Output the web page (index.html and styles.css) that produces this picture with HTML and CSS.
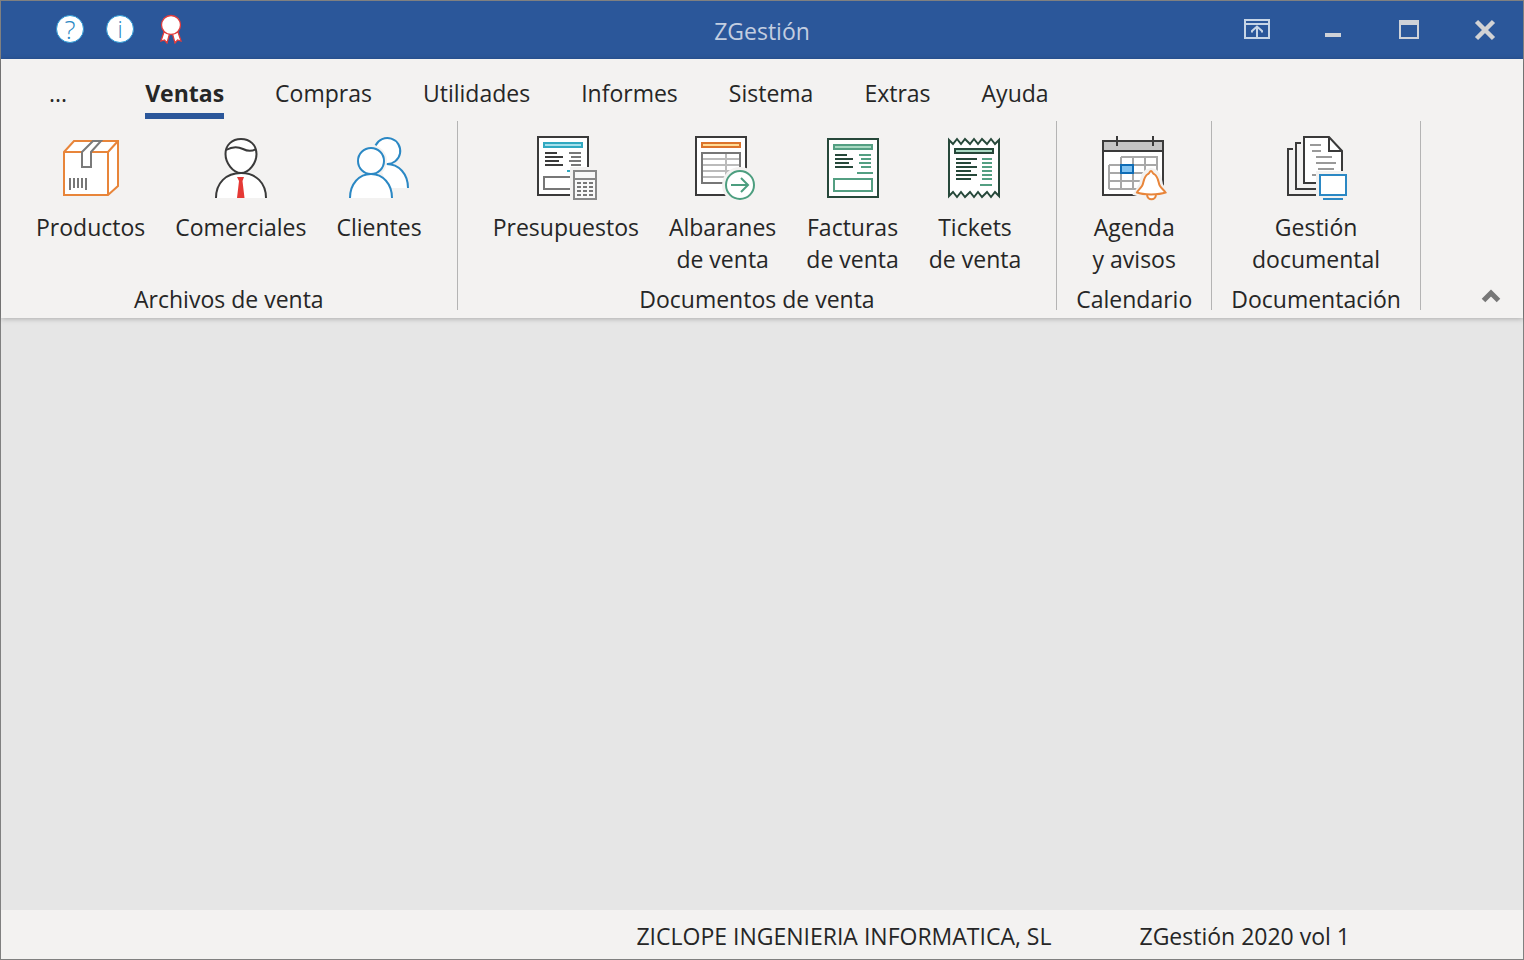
FILE: index.html
```html
<!DOCTYPE html>
<html lang="es">
<head>
    <meta charset="UTF-8">
    <meta name="viewport" content="width=device-width, initial-scale=1.0">
    <title>ZGestión</title>
    <link rel="stylesheet" href="styles.css">
</head>
<body>
    <div class="window">
        <header class="titlebar">
            <div class="quick-access">
                <button class="round-button" aria-label="Ayuda"><span class="help-mark">?</span></button>
                <button class="round-button" aria-label="Información"><span class="info-mark">i</span></button>
                <button class="award-button" aria-label="Licencia">
                    <svg width="28" height="30" viewBox="0 0 28 30" fill="#fff" stroke="#e23c3c" stroke-width="1.3">
                        <path d="M8 18 5 27 8.500 26 11 29 13.500 20ZM22 18 25 27 21.500 26 19 29 16.500 20Z"/>
                        <circle cx="15" cy="11" r="9.500"/>
                    </svg>
                </button>
            </div>
            <h1 class="title">ZGestión</h1>
            <div class="window-controls">
                <button aria-label="Opciones de la cinta">
                    <svg width="28" height="28" viewBox="0 0 28 28" fill="none" stroke="#c7d5e6" stroke-width="2">
                        <path d="M2 5H26V23H2ZM2 9H26M14 22V12M9 17.500V16L14 11.500 19 16V17.500"/>
                    </svg>
                </button>
                <button aria-label="Minimizar">
                    <svg width="28" height="28" viewBox="0 0 28 28"><path d="M6 18H22V22H6Z" fill="#cfd2d8"/></svg>
                </button>
                <button aria-label="Maximizar">
                    <svg width="28" height="28" viewBox="0 0 28 28"><path d="M4 5H24V24H4ZM6 10V22H22V10Z" fill="#cfd2d8" fill-rule="evenodd"/></svg>
                </button>
                <button aria-label="Cerrar">
                    <svg width="28" height="28" viewBox="0 0 28 28"><path d="M5.500 6.500 22.500 23.500M22.500 6.500 5.500 23.500" stroke="#d2d2d4" stroke-width="4.500"/></svg>
                </button>
            </div>
        </header>

        <div class="ribbon">
            <nav class="tabs">
                <button class="tab tab-more">...</button>
                <button class="tab active">Ventas</button>
                <button class="tab">Compras</button>
                <button class="tab">Utilidades</button>
                <button class="tab">Informes</button>
                <button class="tab">Sistema</button>
                <button class="tab">Extras</button>
                <button class="tab">Ayuda</button>
            </nav>

            <div class="groups">
                <section class="group">
                    <div class="group-items">
                        <button class="item">
                            <svg class="icon" viewBox="0 0 72 72" fill="#fff" stroke="#e8853a" stroke-width="2">
                                <path d="M9 20 19 9H63V54L53 63H9Z"/>
                                <path d="M9 20H53V63M53 20 63 9"/>
                                <path d="M27 20 38 9H46L36 20V35H27Z" stroke="#7a7a7a"/>
                                <path d="M15 46V58M19 46V56M23 46V56M27 46V56M31 46V58" stroke="#777"/>
                            </svg>
                            <span>Productos</span>
                        </button>
                        <button class="item">
                            <svg class="icon" viewBox="0 0 72 72" fill="#fff" stroke="#3a3a3a" stroke-width="2">
                                <path d="M11 66C11 51 21 41 36 41S61 51 61 66"/>
                                <path d="M36 7C27 7 20.500 13 20.500 22 20.500 31 28 41 36 41S51.500 31 51.500 22C51.500 13 45 7 36 7Z"/>
                                <path d="M21 18C28 14 34 15 38 17S46 20 51 17" fill="none"/>
                                <path d="M32 45H39L37.500 49 39.500 66H32L34 49Z" fill="#e53935" stroke="none"/>
                            </svg>
                            <span>Comerciales</span>
                        </button>
                        <button class="item">
                            <svg class="icon" viewBox="0 0 72 72" fill="#fff" stroke="#2b88c4" stroke-width="2">
                                <path d="M32.500 13.500A13 13 0 1 1 43.500 32C56 32 65 42 65 56H46L38 38Z" stroke="none"/>
                                <path d="M32.500 13.500A13 13 0 1 1 43.500 32C56 32 65 42 65 56" fill="none"/>
                                <circle cx="28" cy="29" r="16" fill="#f3f2f1" stroke="none"/>
                                <path d="M7 66C7 52 16 42 28 42S49 52 49 66"/>
                                <circle cx="28" cy="29" r="13"/>
                            </svg>
                            <span>Clientes</span>
                        </button>
                    </div>
                    <h2 class="group-title">Archivos de venta</h2>
                </section>

                <section class="group">
                    <div class="group-items">
                        <button class="item">
                            <svg class="icon" viewBox="0 0 72 72" fill="none" stroke="#777" stroke-width="2">
                                <path d="M8 5H58V63H8Z" fill="#fff" stroke="#3a3a3a"/>
                                <path d="M14 11H52V15H14Z" fill="#a6e0ec" stroke="#31a9c1"/>
                                <path d="M15 21H27M15 25H33M15 29H29M15 33H33" stroke="#3a3a3a"/>
                                <path d="M39 21H51M41 25H51M39 29H51M41 33H51"/>
                                <path d="M37 39H40" stroke="#31a9c1"/>
                                <path d="M14 45H45V57H14Z"/>
                                <path d="M40 35H70V71H40Z" fill="#f3f2f1" stroke="none"/>
                                <path d="M44 39H66V67H44ZM44 47H66" fill="#f8f8f8" stroke="#888"/>
                                <path d="M47 51H51M53 51H57M59 51H63M47 55H51M53 55H57M59 55H63M47 59H51M53 59H57M59 59H63M47 63H51M53 63H57M59 63H63"/>
                            </svg>
                            <span>Presupuestos</span>
                        </button>
                        <button class="item">
                            <svg class="icon" viewBox="0 0 72 72" fill="none" stroke="#777" stroke-width="2">
                                <path d="M9 5H59V63H9Z" fill="#fff" stroke="#3a3a3a"/>
                                <path d="M15 11H53V15H15Z" fill="#ffdc96" stroke="#dc742b"/>
                                <path d="M15 27H53M15 33H53M15 39H53M15 45H53M39 21V51" stroke="#bbb"/>
                                <path d="M15 21H53V51H15Z"/>
                                <circle cx="53" cy="53" r="18" fill="#f3f2f1" stroke="none"/>
                                <circle cx="53" cy="53" r="14" fill="#fff" stroke="#4c9e7f"/>
                                <path d="M44 53H61M54 46 61 53 54 60" stroke="#4c9e7f"/>
                            </svg>
                            <span>Albaranes<br>de venta</span>
                        </button>
                        <button class="item">
                            <svg class="icon" viewBox="0 0 72 72" fill="none" stroke="#539f82" stroke-width="2">
                                <path d="M11 7H61V65H11Z" fill="#fff" stroke="#26483a"/>
                                <path d="M17 13H55V17H17Z" fill="#a8d9c2"/>
                                <path d="M18 23H30M18 27H36M18 31H32M18 35H36" stroke="#26483a"/>
                                <path d="M42 23H54M44 27H54M42 31H54M44 35H54M40 41H56"/>
                                <path d="M17 47H55V59H17Z"/>
                            </svg>
                            <span>Facturas<br>de venta</span>
                        </button>
                        <button class="item">
                            <svg class="icon" viewBox="0 0 72 72" fill="none" stroke="#26483a" stroke-width="2">
                                <path d="M10 8 14 12 18 7 22 12 26 7 31 12 35 7 39 12 43 7 48 12 52 7 56 12 60 8V64L56 60 52 65 48 60 43 65 39 60 35 65 31 60 26 65 22 60 18 65 14 60 10 64Z" fill="#fff"/>
                                <path d="M16 17H54V21H16Z" fill="#a8d9c2"/>
                                <path d="M17 27H38M17 31H32M17 35H38M17 39H32M17 43H38M17 47H32"/>
                                <path d="M43 27H53M43 31H53M43 35H53M43 39H53M43 43H53M43 47H53M41 53H53" stroke="#539f82"/>
                            </svg>
                            <span>Tickets<br>de venta</span>
                        </button>
                    </div>
                    <h2 class="group-title">Documentos de venta</h2>
                </section>

                <section class="group">
                    <div class="group-items">
                        <button class="item">
                            <svg class="icon" viewBox="0 0 72 72" fill="none" stroke="#3a3a3a" stroke-width="2">
                                <path d="M5 9H65V63H5Z" fill="#fff"/>
                                <path d="M5 9H65V19H5Z" fill="#c4c4c4"/>
                                <path d="M19 4V14M55 4V14"/>
                                <path d="M23 25H59V49H11V33M11 33H59M11 41H59M11 57H59M11 33V57M23 25V57M35 25V57M47 25V57" stroke="#a8a8a8"/>
                                <path d="M23 33H35V41H23Z" fill="#82c2f0" stroke="#0f6cb5"/>
                                <path d="M53 39C45 40 45 48 44 53L39 61C45 63 61 63 67 61L62 53C61 48 61 40 53 39Z" fill="#f3f2f1" stroke="#f3f2f1" stroke-width="6"/>
                                <path d="M49 62C49 69 58 69 58 62Z" fill="#fff" stroke="#e8853a"/>
                                <path d="M53 39C51.500 39 52 41 50 42 45 45 46 51 44 54 42 57 40 58 39 60.500 45 63 61 63 67.500 60.500 66 58 64 57 62 54 60 51 61 45 56 42 54 41 54.500 39 53 39Z" fill="#fff" stroke="#e8853a"/>
                            </svg>
                            <span>Agenda<br>y avisos</span>
                        </button>
                    </div>
                    <h2 class="group-title">Calendario</h2>
                </section>

                <section class="group">
                    <div class="group-items">
                        <button class="item">
                            <svg class="icon" viewBox="0 0 72 72" fill="none" stroke="#3a3a3a" stroke-width="2">
                                <path d="M13 17H8V63H36M21 11H16V57H36"/>
                                <path d="M24 5H49L62 19V51H24Z" fill="#fff"/>
                                <path d="M49 5V19H62"/>
                                <path d="M30 13H41M32 19H41M36 25H52M36 31H56M38 37H54M32 43H40" stroke="#999"/>
                                <path d="M36 39H70V71H36Z" fill="#f3f2f1" stroke="none"/>
                                <path d="M40 43H66V63H40Z" fill="#fff" stroke="#2b88c4"/>
                                <path d="M43 67H63" stroke="#2b88c4"/>
                            </svg>
                            <span>Gestión<br>documental</span>
                        </button>
                    </div>
                    <h2 class="group-title">Documentación</h2>
                </section>

                <button class="collapse" aria-label="Contraer la cinta">
                    <svg width="20" height="14" viewBox="0 0 20 14"><path d="M2.500 11.500 10 4 17.500 11.500" fill="none" stroke="#777" stroke-width="5"/></svg>
                </button>
            </div>
        </div>

        <main class="workspace"></main>

        <footer class="statusbar">
            <span>ZICLOPE INGENIERIA INFORMATICA, SL</span>
            <span>ZGestión 2020 vol 1</span>
        </footer>
    </div>
</body>
</html>
```

FILE: styles.css
```css
* {
    box-sizing: border-box;
}
body {
    margin: 0;
    font-family: "Segoe UI", "Open Sans", "Noto Sans", sans-serif;
    font-size: 23px;
    color: #262626;
}
button {
    font: inherit;
    color: inherit;
    background: none;
    border: none;
    padding: 0;
    cursor: pointer;
}
svg {
    display: block;
}
.window {
    display: flex;
    flex-direction: column;
    min-height: 100vh;
    border: 1px solid #808080;
    background: #f3f2f1;
}

/* Title bar */
.titlebar {
    display: grid;
    grid-template-columns: 1fr auto 1fr;
    align-items: center;
    height: 58px;
    padding-bottom: 2px;
    background: #2b579a;
}
.quick-access {
    display: flex;
    align-items: center;
    gap: 22px;
    margin-left: 55px;
}
.round-button {
    display: flex;
    justify-content: center;
    align-items: center;
    width: 28px;
    height: 28px;
    border: 1px solid #2b9ad6;
    border-radius: 50%;
    background: #fff;
    color: #2b88c4;
    font-weight: 300;
    line-height: 26px;
}
.help-mark {
    font-size: 26px;
}
.title {
    margin: 0;
    padding-top: 4px;
    font-size: 23px;
    font-weight: 400;
    line-height: 32px;
    color: #c3cee0;
}
.window-controls {
    display: flex;
    justify-content: flex-end;
    gap: 48px;
    margin-right: 24px;
}

/* Ribbon */
.ribbon {
    position: relative;
    padding-bottom: 8px;
    background: #f3f2f1;
    box-shadow: 0 1px 5px rgba(0, 0, 0, 0.25);
}
.tabs {
    display: flex;
    gap: 51px;
    padding: 18px 0 2px 48px;
}
.tab {
    line-height: 32px;
    padding-bottom: 4px;
    border-bottom: 6px solid transparent;
}
.tab-more {
    margin-right: 27px;
}
.tab.active {
    font-weight: 700;
    border-color: #2b579a;
}
.groups {
    display: flex;
}
.group {
    display: flex;
    flex-direction: column;
    align-items: center;
    padding: 11px 19px 1px;
    border-right: 1px solid #b4b4b4;
}
.group-items {
    display: flex;
    flex: 1;
    align-items: flex-start;
    padding: 0 1px;
}
.item {
    padding: 0 15px;
    line-height: 32px;
}
.icon {
    width: 72px;
    height: 72px;
    margin: 0 auto 7px;
}
.group-title {
    margin: 14px 0 0;
    font-size: 23px;
    font-weight: 400;
    line-height: 20px;
}
.collapse {
    align-self: flex-end;
    margin: 0 22px 7px auto;
}

/* Work area and status bar */
.workspace {
    flex: 1;
    background: #e6e6e6;
}
.statusbar {
    display: flex;
    justify-content: flex-end;
    align-items: center;
    gap: 88px;
    height: 49px;
    padding: 3px 173px 0 24px;
}
```
